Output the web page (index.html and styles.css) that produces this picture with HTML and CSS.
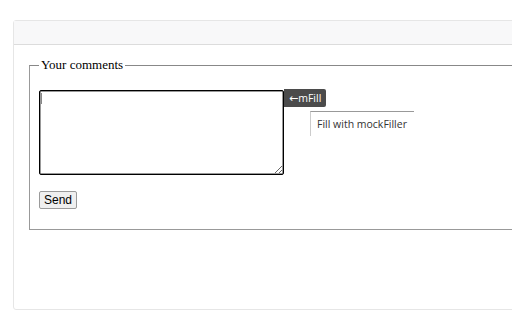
FILE: index.html
```html
<!DOCTYPE html>
<html lang="en">
<head>
  <meta charset="UTF-8" />
  <title>Your comments</title>
  <link rel="stylesheet" href="styles.css">
</head>
<body>
  <div class="page">
    <div class="card">
      <div class="card-header"></div>
      <div class="card-body">
        <form class="comment-form">
          <fieldset>
            <legend>Your comments</legend>
            <div class="field">
              <textarea name="comments"></textarea>
              <span class="caret"></span>
              <span class="mfill-badge"><span class="arrow">&larr;</span>mFill</span>
              <div class="mfill-menu">Fill with mockFiller</div>
            </div>
            <button type="button" class="send">Send</button>
          </fieldset>
        </form>
      </div>
    </div>
  </div>
</body>
</html>
```

FILE: styles.css
```css
html, body {
  margin: 0;
  overflow: hidden;
  background: #fff;
}

.page {
  padding: 20px 0 0 13px;
}

.card {
  width: 560px;
  height: 290px;
  border: 1px solid #e6e6e6;
  border-radius: 3px;
  box-sizing: border-box;
}

.card-header {
  height: 23px;
  background: #f8f8f9;
  border-bottom: 1px solid #dcdcdc;
}

.card-body {
  padding: 12px 0 0 15px;
}

fieldset {
  margin: 0;
  width: 520px;
  padding: 17px 0 20px 9px;
  border: 1px solid #999;
  border-top-color: #888;
  font-family: "Liberation Serif", serif;
  font-size: 13px;
}

legend {
  padding: 0 2px;
  margin-left: 0;
}

.field {
  position: relative;
  width: 245px;
}

textarea {
  display: block;
  width: 245px;
  height: 85px;
  box-sizing: border-box;
  margin: 0;
  border: 1px solid #000;
  box-shadow: inset 0 0 0 0.5px #333;
  border-radius: 2px;
  resize: both;
}

.caret {
  position: absolute;
  left: 2px;
  top: 3px;
  width: 1px;
  height: 11px;
  background: #888;
}

.mfill-badge {
  position: absolute;
  left: 100%;
  top: -1px;
  height: 18px;
  padding: 0 5px 0 5px;
  background: #4b4b4b;
  color: #fff;
  font-family: "Open Sans", sans-serif;
  font-size: 10.5px;
  line-height: 18px;
  border-radius: 0 2px 2px 0;
  white-space: nowrap;
}

.arrow {
  font-family: "DejaVu Sans", sans-serif;
  font-size: 11px;
}

.mfill-menu {
  position: absolute;
  left: calc(100% + 26px);
  top: 21px;
  width: 97px;
  height: 24px;
  padding-left: 6px;
  background: #fff;
  border-top: 1px solid #999;
  border-left: 1px solid #ccc;
  color: #333;
  font-family: "Open Sans", sans-serif;
  font-size: 10.5px;
  line-height: 24px;
  white-space: nowrap;
}

.send {
  margin-top: 16px;
  padding: 1px 4px;
  height: 18px;
  font-family: "Liberation Sans", sans-serif;
  font-size: 12px;
  color: #000;
  background: #efefef;
  border: 1px solid #9a9a9a;
  border-radius: 2px;
}
```
